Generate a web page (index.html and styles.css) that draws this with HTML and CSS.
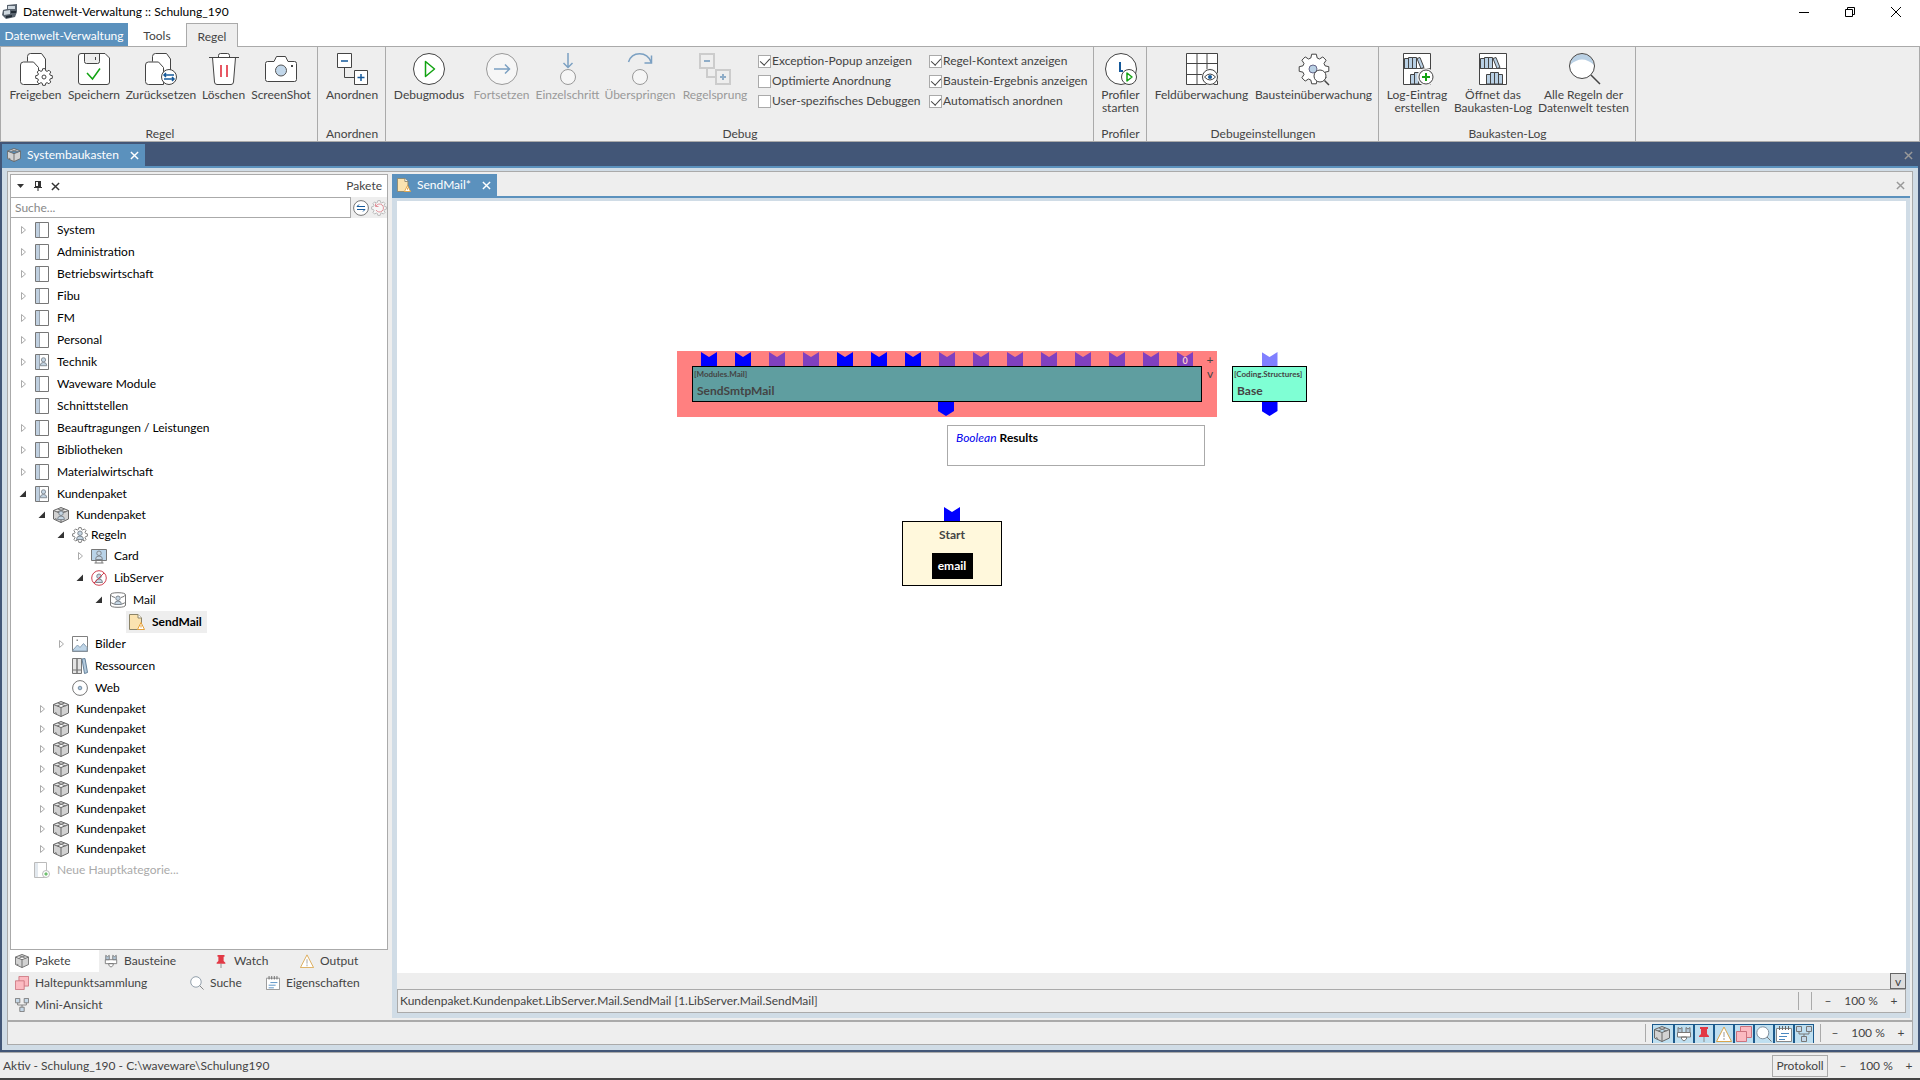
FILE: index.html
```html
<!DOCTYPE html>
<html lang="de">
<head>
<meta charset="utf-8">
<title>Datenwelt-Verwaltung :: Schulung_190</title>
<link rel="stylesheet" href="styles.css">
</head>
<body>
<svg class="defs" aria-hidden="true">
  <symbol id="gear" viewBox="-16 -16 32 32"><path vector-effect="non-scaling-stroke" stroke-linejoin="round" d="M11-3.2L14.8-2.3V2.3L11 3.2 10 5.5 12.1 8.8 8.8 12.1 5.5 10 3.2 11 2.3 14.8H-2.3L-3.2 11-5.5 10-8.8 12.1-12.1 8.8-10 5.5-11 3.2-14.8 2.3V-2.3L-11-3.2-10-5.5-12.1-8.8-8.8-12.1-5.5-10-3.2-11-2.3-14.8H2.3L3.2-11 5.5-10 8.8-12.1 12.1-8.8 10-5.5Z"/></symbol>
  <symbol id="pages" viewBox="0 0 32 32"><path fill="#fff" stroke="#444" d="M7.500 8.500V3.500Q7.500.5 10.500.5H21.500L25.500 6V20M.5 12Q.5 9 3.500 9H13.500L18.500 14.500V31.500H3.500Q.5 31.500.5 28.500Z"/></symbol>
  <symbol id="chip" viewBox="0 0 32 32"><path fill="#fff" stroke="#444" d="M1.500.5H15.500V14.500H1.500ZM18.500 17.500H31.500V31.500H18.500Z"/></symbol>
  <symbol id="person" viewBox="0 0 16 16"><path fill="#c5d6e4" stroke="#808890" d="M4.500 12.500Q4.500 9 8 9T11.500 12.500ZM8 4A2 2 0 1 1 8 8.500 2 2 0 1 1 8 4Z"/></symbol>
  <symbol id="book" viewBox="0 0 16 16"><path fill="#fff" stroke="#777" d="M1.500.5H14.500V15.500H1.500Z"/><path fill="#c0d0e0" d="M2 1H5V15H2Z"/><path stroke="#9aa4ae" d="M5.500 1V15"/></symbol>
  <symbol id="userbook" viewBox="0 0 16 16"><use href="#book"/><use href="#person" x="2" y="0" width="15" height="15"/></symbol>
  <symbol id="box" viewBox="0 0 16 16"><path fill="#d2d2d2" stroke="#666" stroke-linejoin="round" d="M8 .5L15.500 3.500V12L8 15.500.5 12V3.500ZM.5 3.500L8 6.500 15.500 3.500M8 6.500V15.500"/><path stroke="#777" fill="none" d="M4 5L11.500 2M5 2L12.500 5M2 11.500L4 12.500"/></symbol>
  <symbol id="userbox" viewBox="0 0 16 16"><use href="#box"/><use href="#person"/></symbol>
  <symbol id="usergear" viewBox="0 0 16 16"><use href="#gear" width="16" height="16" fill="#fff" stroke="#808080"/><use href="#person" width="16" height="16"/></symbol>
  <symbol id="screen" viewBox="0 0 16 16"><path fill="#b9d3e8" stroke="#777" d="M.5 1.500H15.500V12.500H.5ZM5 12.500V15M11 12.500V15M3.500 15H12.500"/><use href="#person" y="-1" width="16" height="16"/></symbol>
  <symbol id="nouser" viewBox="0 0 16 16"><use href="#person"/><circle cx="8" cy="8" r="7.300" fill="none" stroke="#d04050"/><path stroke="#d04050" d="M13 3L3 13"/></symbol>
  <symbol id="drum" viewBox="0 0 16 16"><path fill="#fff" stroke="#777" d="M.5 3Q.5.7 8 .7T15.500 3V13Q15.500 15.300 8 15.300T.5 13ZM.5 3Q1 4.500 5 5.500M15.500 3Q15 4.500 11 5.500M.5 10Q1 11 4 12M15.500 10Q15 11 12 12"/><use href="#person"/></symbol>
  <symbol id="rule" viewBox="0 0 16 16"><path fill="#fbe3b0" stroke="#8c8468" d="M.5.5H9L12.500 4V15.500H.5Z"/><path fill="#fff" stroke="#8c8468" d="M9 .5V4H12.500"/><path fill="#fff" stroke="#e5a13a" stroke-linejoin="round" d="M12 8.500L15.500 15.500H8.500ZM12 11V13.500"/></symbol>
  <symbol id="image" viewBox="0 0 16 16"><path fill="#fff" stroke="#808080" d="M.5.5H15.500V15.500H.5Z"/><path fill="#c0d6e8" stroke="#8aa0b4" d="M1 14L5.500 9 8 11.500 11.500 7.500 15 11.500V15H1Z"/><path fill="#888" d="M4.500 3.500H6V5H4.500Z"/></symbol>
  <symbol id="folders" viewBox="0 0 16 16"><path fill="#e4e4e4" stroke="#777" d="M.5.5H5V15.500H.5ZM5 .5H9.500V15.500H5ZM1 12H9"/><path fill="#b5cbdd" stroke="#64809a" d="M10 1L13 .5 15.500 14.500 12.500 15.500Z"/></symbol>
  <symbol id="disc" viewBox="0 0 16 16"><circle cx="8" cy="8" r="7.400" fill="#fff" stroke="#777"/><circle cx="8" cy="8" r="1.800" fill="#a8c4de" stroke="#7890a4"/></symbol>
  <symbol id="bricks" viewBox="0 0 16 16"><path fill="#fff" stroke="#777" d="M1.500 6.500H14.500V11H1.500ZM5.500 11H10.500V13L8 15 5.500 13Z"/><path fill="#b4c9da" stroke="#777" d="M2 1.500L4 3 6 1.500V6.500H2ZM10 1.500L12 3 14 1.500V6.500H10Z"/></symbol>
  <symbol id="pin" viewBox="0 0 16 16"><path fill="#e23945" d="M4 1H12V3H11V8L13 10V11H3V10L5 8V3H4Z"/><path stroke="#888" d="M8 11V16"/></symbol>
  <symbol id="warn" viewBox="0 0 16 16"><path fill="#fff" stroke="#d9a54c" stroke-linejoin="round" d="M8 1L15.500 15.500H.5Z"/><path stroke="#999" d="M8 6V11M8 12V14"/></symbol>
  <symbol id="stops" viewBox="0 0 16 16"><path fill="#fbbac1" stroke="#cb737e" d="M4.500.5H15.500V11.500H4.500Z"/><path fill="#fbbac1" stroke="#cb737e" d="M.5 5.500H10.500V15.500H.5Z"/></symbol>
  <symbol id="lens" viewBox="0 0 16 16"><circle cx="6.800" cy="6.800" r="6" fill="#fff" stroke="#8492a0"/><path stroke="#777" d="M11 11L15.500 15.500"/></symbol>
  <symbol id="note" viewBox="0 0 16 16"><path fill="#fff" stroke="#888" d="M.5 2.500H15.500V15.500H.5Z"/><path stroke="#666" d="M3.500 0V4M6.500 0V4M9.500 0V4M12.500 0V4"/><path stroke="#4a88c0" d="M5 7.500H13M3 10.500H11M3 13.500H9"/></symbol>
  <symbol id="net" viewBox="0 0 16 16"><path fill="#c5d8e8" stroke="#777" d="M.5.5H5.500V5.500H.5ZM10.500.5H15.500V5.500H10.500ZM5.500 10.500H10.500V15.500H5.500Z"/><path stroke="#777" d="M3 5.500V8H13V5.500M8 8V10.500"/></symbol>
  <symbol id="newbook" viewBox="0 0 16 16"><path fill="#fff" stroke="#bbb" d="M.5.5H12.500V15.500H.5Z"/><path fill="#e2e8ee" d="M1 1H4V15H1Z"/><circle cx="12" cy="12" r="3.500" fill="#fff" stroke="#bbb"/><path stroke="#6fbf6f" stroke-width="2" d="M10.500 12H13.500M12 10.500V13.500"/></symbol>
  <symbol id="cross" viewBox="0 0 10 10"><path stroke="currentColor" stroke-width="1.600" d="M1 1L9 9M9 1L1 9"/></symbol>
  <symbol id="closed" viewBox="0 0 10 10"><path fill="#fff" stroke="#aaa" d="M2.500 1.500V8.500L6.500 5Z"/></symbol>
  <symbol id="open" viewBox="0 0 10 10"><path fill="#333" d="M7 1.500V8H.5Z"/></symbol>
  <symbol id="shelf" viewBox="0 0 32 32"><path fill="#fff" stroke="#444" d="M2.500.5H29.500V31.500H2.500Z"/><path stroke="#555" d="M3 15.500H29"/><path fill="#b9d0e4" stroke="#444" d="M3.500 5.500H7.500V15.500H3.500ZM7.500 4.500H11.500V15.500H7.500ZM11.500 4.500H15.500V15.500H11.500ZM16 5.500L19 4.500 23 14.500 20 15.500ZM9.500 21.500H13.500V31H9.500ZM13.500 19.500H17.500V31H13.500ZM17.500 19.500H21.500V31H17.500ZM21.500 21.500H25.500V31H21.500Z"/></symbol>
</svg>

<header class="titlebar">
  <svg class="i16" viewBox="0 0 16 16"><path fill="#59636e" d="M5 1L15 0V8L13 13 4 15 0 11 1 6 5 5Z"/><path fill="#cfd8df" d="M6 2H13V5H6ZM2 7L8 6V10L2 11Z"/><path fill="#222c36" d="M9 7H14V9H9ZM4 12L10 11V13L4 14Z"/></svg>
  <h1>Datenwelt-Verwaltung :: Schulung_190</h1>
  <div class="window-buttons">
    <button aria-label="Minimieren"><svg viewBox="0 0 12 12"><path stroke="#000" d="M1 6.500H11"/></svg></button>
    <button aria-label="Wiederherstellen"><svg viewBox="0 0 12 12"><path fill="none" stroke="#000" d="M1.500 3.500H8.500V10.500H1.500ZM3.500 3V1.500H10.500V8.500H9"/></svg></button>
    <button aria-label="Schließen"><svg viewBox="0 0 12 12"><path stroke="#000" d="M1 1L11 11M11 1L1 11"/></svg></button>
  </div>
</header>

<nav class="ribbon-tabs">
  <button class="app-tab">Datenwelt-Verwaltung</button>
  <button class="tab">Tools</button>
  <button class="tab current">Regel</button>
</nav>

<div class="ribbon">
  <section class="group">
    <div class="tools tools-regel">
      <button><svg class="i32" viewBox="0 0 32 32"><use href="#pages" width="32" height="32"/><use href="#gear" x="15" y="15" width="18" height="18" fill="#fff" stroke="#444"/><circle cx="24" cy="24" r="2" fill="#fff" stroke="#444"/></svg><span>Freigeben</span></button>
      <button><svg class="i32" viewBox="0 0 32 32"><path fill="#fff" stroke="#444" d="M3 .5H27L31.500 5V29Q31.500 31.500 29 31.500H3Q.5 31.500.5 29V3Q.5.5 3 .5ZM6.500.5V8.500Q6.500 10.500 8.500 10.500H19.500Q21.500 10.500 21.500 8.500V.5"/><path stroke="#444" d="M17.500 4V7"/><path fill="none" stroke="#12a312" stroke-width="1.500" d="M9 20L14.500 26 22 15.500"/></svg><span>Speichern</span></button>
      <button><svg class="i32" viewBox="0 0 32 32"><use href="#pages" width="32" height="32"/><circle cx="24" cy="24" r="7.500" fill="#fff" stroke="#444"/><path fill="none" stroke="#15599a" stroke-width="1.500" d="M29 22H19M21 20L19 22 21 24M19 26H29M27 24L29 26 27 28"/></svg><span>Zurücksetzen</span></button>
      <button><svg class="i32" viewBox="0 0 32 32"><path fill="#fff" stroke="#444" d="M4.500 4.500H27.500L25.500 29Q25.300 31.500 23 31.500H9Q6.700 31.500 6.500 29ZM1 4.500H31M10.500 4.500V2.500Q10.500.5 12.500.5H19.500Q21.500.5 21.500 2.500V4.500"/><path stroke="#e02030" stroke-width="1.500" d="M13 12V24M19 12V24"/></svg><span>Löschen</span></button>
      <button><svg class="i32" viewBox="0 0 32 32"><path fill="#fff" stroke="#444" d="M2.500 8.500H9L11.500 3.500H20.500L23 8.500H29.500Q31.500 8.500 31.500 10.500V26.500Q31.500 28.500 29.500 28.500H2.500Q.5 28.500.5 26.500V10.500Q.5 8.500 2.500 8.500Z"/><circle cx="16" cy="17.500" r="5.500" fill="#c2d7ea" stroke="#555"/><path fill="#444" d="M26 12H28V14H26Z"/></svg><span>ScreenShot</span></button>
    </div>
    <h2>Regel</h2>
  </section>
  <section class="group">
    <div class="tools tools-anordnen">
      <button><svg class="i32" viewBox="0 0 32 32"><path fill="none" stroke="#444" d="M8.500 15V24.500H18"/><use href="#chip" width="32" height="32"/><path stroke="#15599a" stroke-width="1.500" d="M5 8H12M21.500 24.500H28.500M25 21V28"/></svg><span>Anordnen</span></button>
    </div>
    <h2>Anordnen</h2>
  </section>
  <section class="group">
    <div class="debug-row">
      <div class="tools tools-debug">
        <button><svg class="i32" viewBox="0 0 32 32"><circle cx="16" cy="16" r="15.500" fill="#fff" stroke="#444"/><path fill="none" stroke="#12a312" stroke-width="1.500" stroke-linejoin="round" d="M12.500 8.500V23.500L21.500 16Z"/></svg><span>Debugmodus</span></button>
        <button disabled><svg class="i32" viewBox="0 0 32 32"><circle cx="16" cy="16" r="15.500" fill="#f6f6f6" stroke="#999"/><path fill="none" stroke="#7ba0c2" stroke-width="1.500" d="M8 16H23.500M19 11.500L23.500 16 19 20.500"/></svg><span>Fortsetzen</span></button>
        <button disabled><svg class="i32" viewBox="0 0 32 32"><circle cx="16" cy="24" r="7.500" fill="#f6f6f6" stroke="#999"/><path fill="none" stroke="#7ba0c2" stroke-width="1.500" d="M16 0V14M11.500 10L16 14.500 20.500 10"/></svg><span>Einzelschritt</span></button>
        <button disabled><svg class="i32" viewBox="0 0 32 32"><circle cx="16" cy="24" r="7.500" fill="#f6f6f6" stroke="#999"/><path fill="none" stroke="#7ba0c2" stroke-width="1.500" d="M4.500 9C8 -2 23 -2 27 9M27.500 2.500V10H20.500"/></svg><span>Überspringen</span></button>
        <button disabled><svg class="i32" viewBox="0 0 32 32"><path fill="none" stroke="#ccc" stroke-width="2" d="M8 15V24H17M1 1H15V15H1ZM17 17H31V31H17Z"/><path stroke="#8fadc8" stroke-width="2" d="M5 8H11M21 24H27M24 21V27"/></svg><span>Regelsprung</span></button>
      </div>
      <div class="checks">
        <label><input type="checkbox" checked>Exception-Popup anzeigen</label>
        <label><input type="checkbox" checked>Regel-Kontext anzeigen</label>
        <label><input type="checkbox">Optimierte Anordnung</label>
        <label><input type="checkbox" checked>Baustein-Ergebnis anzeigen</label>
        <label><input type="checkbox">User-spezifisches Debuggen</label>
        <label><input type="checkbox" checked>Automatisch anordnen</label>
      </div>
    </div>
    <h2>Debug</h2>
  </section>
  <section class="group">
    <div class="tools tools-profiler">
      <button><svg class="i32" viewBox="0 0 32 32"><circle cx="16" cy="16" r="15.500" fill="#fff" stroke="#444"/><path fill="none" stroke="#15599a" stroke-width="2" d="M15 9V18H18"/><circle cx="24" cy="24" r="7.500" fill="#fff" stroke="#444"/><path fill="none" stroke="#12a312" stroke-width="1.500" stroke-linejoin="round" d="M22 20V28L27 24Z"/></svg><span>Profiler<br>starten</span></button>
    </div>
    <h2>Profiler</h2>
  </section>
  <section class="group">
    <div class="tools tools-watch">
      <button><svg class="i32" viewBox="0 0 32 32"><path fill="#fff" stroke="#444" d="M.5.5H31.500V31.500H.5ZM11 0V32M21 0V32M0 10.500H32M0 21.500H32"/><circle cx="24" cy="24" r="8.500" fill="#eee"/><circle cx="24" cy="24" r="7.500" fill="#fff" stroke="#444"/><path fill="#fff" stroke="#444" d="M18.500 24Q24 18 29.500 24 24 30 18.500 24Z"/><circle cx="24" cy="24" r="2" fill="#15599a"/></svg><span>Feldüberwachung</span></button>
      <button><svg class="i32" viewBox="0 0 32 32"><use href="#gear" width="32" height="32" fill="#fff" stroke="#444"/><circle cx="15" cy="16" r="4" fill="#b9d0e4" stroke="#668"/><circle cx="22" cy="23" r="6" fill="#fff" stroke="#444"/><path stroke="#444" stroke-width="1.500" d="M26.500 27.500L31 32"/></svg><span>Bausteinüberwachung</span></button>
    </div>
    <h2>Debugeinstellungen</h2>
  </section>
  <section class="group">
    <div class="tools tools-log">
      <button><svg class="i32" viewBox="0 0 32 32"><use href="#shelf" width="32" height="32"/><circle cx="25" cy="24" r="9" fill="#eee"/><circle cx="25" cy="24" r="7" fill="#fff" stroke="#444"/><path stroke="#12a312" stroke-width="2" d="M21 24H29M25 20V28"/></svg><span>Log-Eintrag<br>erstellen</span></button>
      <button><svg class="i32" viewBox="0 0 32 32"><use href="#shelf" width="32" height="32"/></svg><span>Öffnet das<br>Baukasten-Log</span></button>
      <button><svg class="i32" viewBox="0 0 32 32"><circle cx="14" cy="13" r="12.500" fill="#fff"/><path fill="#b9d0e4" d="M2 12Q4 1 14 1T26 12Q14 1 2 12Z"/><circle cx="14" cy="13" r="12.500" fill="none" stroke="#444"/><path stroke="#444" stroke-width="1.500" d="M23 22L32 31"/></svg><span>Alle Regeln der<br>Datenwelt testen</span></button>
    </div>
    <h2>Baukasten-Log</h2>
  </section>
</div>

<main class="workspace">
  <div class="doc-tabs outer-tabs">
    <button class="doc-tab"><svg class="i14" viewBox="0 0 16 16"><use href="#box"/></svg>Systembaukasten<svg class="x"><use href="#cross"/></svg></button>
    <button class="close-all" aria-label="Schließen"><svg class="x"><use href="#cross"/></svg></button>
  </div>
  <div class="frame">
    <div class="board">
      <div class="columns">
        <aside class="side">
          <div class="panel">
            <div class="panel-head">
              <button aria-label="Menü"><svg class="i10" viewBox="0 0 10 10"><path fill="#333" d="M2 3H9L5.500 7Z"/></svg></button>
              <button aria-label="Anheften"><svg class="i10" viewBox="0 0 10 10"><path fill="#333" d="M2 0H8V6H9V7H5.500V10H4.500V7H1V6H2Z"/><path fill="#fff" d="M3 1H5V5H3Z"/></svg></button>
              <button aria-label="Schließen"><svg class="x"><use href="#cross"/></svg></button>
              <h2>Pakete</h2>
            </div>
            <div class="search">
              <input type="text" placeholder="Suche..." aria-label="Suche">
              <button aria-label="Wechseln"><svg class="i16" viewBox="0 0 16 16"><circle cx="8" cy="8" r="7.400" fill="#fff" stroke="#777"/><path fill="none" stroke="#15599a" d="M12 6.500H4M6 4.500L4 6.500M4 9.500H12M10 11.500L12 9.500"/></svg></button>
              <button aria-label="Zurücksetzen"><svg class="i16" viewBox="0 0 16 16"><use href="#gear" width="16" height="16" fill="#f6f6f6" stroke="#bbb"/><path fill="none" stroke="#e2929a" d="M5 10A4 4 0 1 0 5 6M4.500 3.500V6.500H7.500"/></svg></button>
            </div>
            <ul class="tree">
              <li><svg class="arrow"><use href="#closed"/></svg><svg class="i16"><use href="#book"/></svg><span>System</span></li>
              <li><svg class="arrow"><use href="#closed"/></svg><svg class="i16"><use href="#book"/></svg><span>Administration</span></li>
              <li><svg class="arrow"><use href="#closed"/></svg><svg class="i16"><use href="#book"/></svg><span>Betriebswirtschaft</span></li>
              <li><svg class="arrow"><use href="#closed"/></svg><svg class="i16"><use href="#book"/></svg><span>Fibu</span></li>
              <li><svg class="arrow"><use href="#closed"/></svg><svg class="i16"><use href="#book"/></svg><span>FM</span></li>
              <li><svg class="arrow"><use href="#closed"/></svg><svg class="i16"><use href="#book"/></svg><span>Personal</span></li>
              <li><svg class="arrow"><use href="#closed"/></svg><svg class="i16"><use href="#userbook"/></svg><span>Technik</span></li>
              <li><svg class="arrow"><use href="#closed"/></svg><svg class="i16"><use href="#book"/></svg><span>Waveware Module</span></li>
              <li><svg class="arrow"></svg><svg class="i16"><use href="#book"/></svg><span>Schnittstellen</span></li>
              <li><svg class="arrow"><use href="#closed"/></svg><svg class="i16"><use href="#book"/></svg><span>Beauftragungen / Leistungen</span></li>
              <li><svg class="arrow"><use href="#closed"/></svg><svg class="i16"><use href="#book"/></svg><span>Bibliotheken</span></li>
              <li><svg class="arrow"><use href="#closed"/></svg><svg class="i16"><use href="#book"/></svg><span>Materialwirtschaft</span></li>
              <li><svg class="arrow"><use href="#open"/></svg><svg class="i16"><use href="#userbook"/></svg><span>Kundenpaket</span></li>
              <li class="l1 tight"><svg class="arrow"><use href="#open"/></svg><svg class="i16"><use href="#userbox"/></svg><span>Kundenpaket</span></li>
              <li class="l2 tight near"><svg class="arrow"><use href="#open"/></svg><svg class="i16"><use href="#usergear"/></svg><span>Regeln</span></li>
              <li class="l3"><svg class="arrow"><use href="#closed"/></svg><svg class="i16"><use href="#screen"/></svg><span>Card</span></li>
              <li class="l3"><svg class="arrow"><use href="#open"/></svg><svg class="i16"><use href="#nouser"/></svg><span>LibServer</span></li>
              <li class="l4"><svg class="arrow"><use href="#open"/></svg><svg class="i16"><use href="#drum"/></svg><span>Mail</span></li>
              <li class="l5"><svg class="arrow"></svg><div class="selected"><svg class="i16"><use href="#rule"/></svg><span>SendMail</span></div></li>
              <li class="l2"><svg class="arrow"><use href="#closed"/></svg><svg class="i16"><use href="#image"/></svg><span>Bilder</span></li>
              <li class="l2"><svg class="arrow"></svg><svg class="i16"><use href="#folders"/></svg><span>Ressourcen</span></li>
              <li class="l2"><svg class="arrow"></svg><svg class="i16"><use href="#disc"/></svg><span>Web</span></li>
              <li class="l1 tight"><svg class="arrow"><use href="#closed"/></svg><svg class="i16"><use href="#box"/></svg><span>Kundenpaket</span></li>
              <li class="l1 tight"><svg class="arrow"><use href="#closed"/></svg><svg class="i16"><use href="#box"/></svg><span>Kundenpaket</span></li>
              <li class="l1 tight"><svg class="arrow"><use href="#closed"/></svg><svg class="i16"><use href="#box"/></svg><span>Kundenpaket</span></li>
              <li class="l1 tight"><svg class="arrow"><use href="#closed"/></svg><svg class="i16"><use href="#box"/></svg><span>Kundenpaket</span></li>
              <li class="l1 tight"><svg class="arrow"><use href="#closed"/></svg><svg class="i16"><use href="#box"/></svg><span>Kundenpaket</span></li>
              <li class="l1 tight"><svg class="arrow"><use href="#closed"/></svg><svg class="i16"><use href="#box"/></svg><span>Kundenpaket</span></li>
              <li class="l1 tight"><svg class="arrow"><use href="#closed"/></svg><svg class="i16"><use href="#box"/></svg><span>Kundenpaket</span></li>
              <li class="l1 tight"><svg class="arrow"><use href="#closed"/></svg><svg class="i16"><use href="#box"/></svg><span>Kundenpaket</span></li>
              <li class="new"><svg class="arrow"></svg><svg class="i16"><use href="#newbook"/></svg><span>Neue Hauptkategorie...</span></li>
            </ul>
          </div>
          <nav class="side-tabs">
            <div class="tab-row row-a">
              <button class="active"><svg class="i14"><use href="#box"/></svg>Pakete</button>
              <button><svg class="i14"><use href="#bricks"/></svg>Bausteine</button>
              <button><svg class="i14"><use href="#pin"/></svg>Watch</button>
              <button><svg class="i14"><use href="#warn"/></svg>Output</button>
            </div>
            <div class="tab-row row-b">
              <button><svg class="i14"><use href="#stops"/></svg>Haltepunktsammlung</button>
              <button><svg class="i14"><use href="#lens"/></svg>Suche</button>
              <button><svg class="i14"><use href="#note"/></svg>Eigenschaften</button>
            </div>
            <div class="tab-row">
              <button><svg class="i14"><use href="#net"/></svg>Mini-Ansicht</button>
            </div>
          </nav>
        </aside>

        <section class="editor">
          <div class="doc-tabs inner-tabs">
            <button class="doc-tab"><svg class="i14"><use href="#rule"/></svg>SendMail*<svg class="x"><use href="#cross"/></svg></button>
            <button class="close-all" aria-label="Schließen"><svg class="x"><use href="#cross"/></svg></button>
          </div>
          <div class="sheet">
            <div class="canvas">
              <div class="node smtp">
                <div class="ports">
                  <i class="port in"></i><i class="port in"></i><i class="port in optional"></i><i class="port in optional"></i><i class="port in"></i><i class="port in"></i><i class="port in"></i><i class="port in optional"></i><i class="port in optional"></i><i class="port in optional"></i><i class="port in optional"></i><i class="port in optional"></i><i class="port in optional"></i><i class="port in optional"></i><b class="port in optional">0</b>
                </div>
                <div class="block">
                  <small>[Modules.Mail]</small>
                  <strong>SendSmtpMail</strong>
                </div>
                <i class="port out"></i>
                <div class="handles"><span>+</span><span>v</span></div>
              </div>
              <div class="node base">
                <i class="port in optional"></i>
                <div class="block">
                  <small>[Coding.Structures]</small>
                  <strong>Base</strong>
                </div>
                <i class="port out"></i>
              </div>
              <div class="node results"><em>Boolean</em> <b>Results</b></div>
              <div class="node start">
                <i class="port in"></i>
                <div class="block">
                  <strong>Start</strong>
                  <span class="value">email</span>
                </div>
              </div>
            </div>
            <div class="scroll-strip"><button>v</button></div>
            <div class="path-bar">
              <span class="path">Kundenpaket.Kundenpaket.LibServer.Mail.SendMail [1.LibServer.Mail.SendMail]</span>
              <i class="sep"></i><i class="sep"></i>
              <div class="zoom"><button>–</button><span>100 %</span><button>+</button></div>
            </div>
          </div>
        </section>
      </div>
      <div class="board-bar">
        <i class="sep"></i>
        <div class="dock">
          <button aria-label="Pakete"><svg class="i16"><use href="#box"/></svg></button>
          <button aria-label="Bausteine"><svg class="i16"><use href="#bricks"/></svg></button>
          <button aria-label="Watch"><svg class="i16"><use href="#pin"/></svg></button>
          <button aria-label="Output"><svg class="i16"><use href="#warn"/></svg></button>
          <button aria-label="Haltepunktsammlung"><svg class="i16"><use href="#stops"/></svg></button>
          <button aria-label="Suche"><svg class="i16"><use href="#lens"/></svg></button>
          <button aria-label="Eigenschaften"><svg class="i16"><use href="#note"/></svg></button>
          <button aria-label="Mini-Ansicht"><svg class="i16"><use href="#net"/></svg></button>
        </div>
        <i class="sep"></i>
        <div class="zoom"><button>–</button><span>100 %</span><button>+</button></div>
      </div>
    </div>
  </div>
</main>

<footer class="status">
  <span class="path">Aktiv - Schulung_190 - C:\waveware\Schulung190</span>
  <button class="log">Protokoll</button>
  <div class="zoom"><button>–</button><span>100 %</span><button>+</button></div>
</footer>
</body>
</html>
```
FILE: styles.css
```css
* { box-sizing: border-box; }

body {
  margin: 0;
  min-height: 100vh;
  display: flex;
  flex-direction: column;
  background: #fff;
  color: #444;
  font: 12px/16px Lato, "Open Sans", sans-serif;
}

button {
  margin: 0;
  padding: 0;
  border: 0;
  background: none;
  color: inherit;
  font: inherit;
  white-space: nowrap;
}

h1, h2 { margin: 0; font-size: 12px; font-weight: 400; }
svg { display: block; flex: none; fill: none; }
.defs { position: absolute; width: 0; height: 0; }
.i10 { width: 10px; height: 10px; }
.i14 { width: 14px; height: 14px; }
.i16 { width: 16px; height: 16px; }
.i32 { width: 32px; height: 32px; overflow: visible; }
.x { width: 9px; height: 9px; }
.sep { width: 1px; height: 18px; background: #aaa; }

/* title bar */
.titlebar { display: flex; align-items: center; height: 23px; padding-left: 2px; gap: 5px; color: #000; }
.window-buttons { display: flex; margin-left: auto; padding-right: 1px; }
.window-buttons button { width: 46px; display: flex; justify-content: center; }
.window-buttons svg { width: 12px; height: 12px; }

/* ribbon */
.ribbon-tabs { display: flex; height: 24px; margin-bottom: -1px; position: relative; }
.ribbon-tabs button { padding-top: 2px; }
.app-tab { width: 128px; height: 23px; background: #5b91bd; color: #fff; }
.tab { width: 58px; }
.tab.current { width: 52px; border: 1px solid #aaa; border-bottom: 0; background: #eee; }
.ribbon { display: flex; min-height: 96px; padding-left: 1px; border: 1px solid #aaa; background: #eee; }
.group { display: flex; flex-direction: column; padding: 6px 3px 0 4px; border-right: 1px solid #aaa; }
.group h2 { margin-top: auto; line-height: 15px; text-align: center; }
.tools { display: grid; justify-content: center; }
.tools button { display: flex; flex-direction: column; align-items: center; gap: 3px; line-height: 13px; }
.tools button:disabled { color: #999; }
.tools-regel { grid-template-columns: 59px 58px 76px 49px 66px; }
.tools-anordnen { grid-template-columns: 60px; }
.tools-debug { grid-template-columns: 78px 67px 65px 80px 70px; }
.tools-profiler { grid-template-columns: 45px; }
.tools-watch { grid-template-columns: 101px 123px; }
.tools-log { grid-template-columns: 68px 84px 97px; }
.debug-row { display: flex; gap: 8px; }
.checks { display: grid; grid-template-columns: 171px 161px; align-content: start; row-gap: 4px; }
.checks label { display: flex; align-items: center; gap: 1px; white-space: nowrap; }
.checks input {
  appearance: none;
  display: grid;
  place-items: center;
  flex: none;
  width: 13px;
  height: 13px;
  margin: 0;
  border: 1px solid #aaa;
  background: #fff;
}
.checks input:checked::after {
  content: "";
  width: 5px;
  height: 8px;
  margin-bottom: 2px;
  border: solid #444;
  border-width: 0 1px 1px 0;
  transform: rotate(42deg);
}

/* document tabs */
.doc-tabs { display: flex; align-items: stretch; justify-content: space-between; border-bottom: 2px solid #5b91bd; }
.doc-tab { display: flex; align-items: center; padding: 0 6px 0 5px; background: #5b91bd; color: #fff; }
.doc-tab .i14 { margin-right: 6px; }
.doc-tab .x { margin-left: auto; }
.close-all { padding-right: 5px; color: #999; }
.outer-tabs { height: 26px; padding-top: 2px; }
.outer-tabs .doc-tab { width: 143px; }
.inner-tabs { height: 24px; }
.inner-tabs .doc-tab { width: 105px; }

/* workspace */
.workspace { flex: 1; display: flex; flex-direction: column; padding: 0 2px 2px; background: #425677; }
.frame { flex: 1; display: flex; padding: 3px 5px 5px; background: #d0dce6; }
.board { flex: 1; min-width: 0; display: flex; flex-direction: column; border: 1px solid #aaa; background: #eee; }
.columns { flex: 1; display: flex; gap: 4px; padding: 2px; }
.board-bar { display: flex; align-items: center; height: 24px; border-top: 2px solid #aaa; justify-content: flex-end; gap: 6px; padding-right: 3px; }

/* package panel */
.side { width: 378px; display: flex; flex-direction: column; }
.panel { flex: 1; display: flex; flex-direction: column; border: 1px solid #aaa; background: #fff; }
.panel-head { display: flex; align-items: center; height: 22px; padding: 0 5px 0 4px; gap: 8px; }
.panel-head h2 { margin-left: auto; }
.panel-head button { color: #333; }
.search { display: flex; align-items: center; height: 21px; gap: 2px; background: #eee; }
.search input {
  flex: 1;
  min-width: 0;
  align-self: stretch;
  padding: 0 4px;
  border: 1px solid #aaa;
  border-left: 0;
  background: #fff;
  font: inherit;
  color: #444;
}
.search input::placeholder { color: #888; }
.tree { list-style: none; margin: 0; padding: 1px 0 0; color: #000; }
.tree li { display: flex; align-items: center; height: 22px; padding-left: 8px; white-space: nowrap; }
.tree li > .i16 { margin: 0 7px 0 5px; }
.arrow { width: 10px; height: 10px; }
.tree .tight { height: 20px; }
.tree .l1 { padding-left: 27px; }
.tree .l2 { padding-left: 46px; }
.tree .l3 { padding-left: 65px; }
.tree .l4 { padding-left: 84px; }
.tree .l5 { padding-left: 103px; }
.tree .near > .i16 { margin-right: 3px; }
.tree .new { color: #aaa; }
.selected { display: flex; align-items: center; gap: 7px; height: 22px; margin-left: 2px; padding: 0 5px 0 3px; background: #eee; font-weight: 700; }
.side-tabs { display: flex; flex-direction: column; padding-bottom: 2px; }
.tab-row { display: grid; }
.row-a { grid-template-columns: 89fr 110fr 86fr 93fr; }
.row-b { grid-template-columns: 175fr 76fr 127fr; }
.tab-row button { display: flex; align-items: center; height: 22px; gap: 6px; padding-left: 5px; }
.tab-row .active { background: #fff; }

/* editor */
.editor { flex: 1; min-width: 0; display: flex; flex-direction: column; }
.sheet { flex: 1; display: flex; flex-direction: column; padding: 3px 4px 5px 5px; background: #d0dce6; }
.canvas { flex: 1; position: relative; overflow: hidden; background: #fff; }
.scroll-strip { display: flex; justify-content: flex-end; background: #eee; }
.scroll-strip button { width: 16px; height: 16px; border: 1px solid #666; background: #ddd; }
.path-bar { display: flex; align-items: center; height: 24px; gap: 12px; padding: 0 3px 0 2px; border: 1px solid #aaa; background: #eee; }
.path { margin-right: auto; }

.zoom { display: flex; align-items: center; }
.zoom button { width: 16px; }
.zoom span { width: 50px; text-align: center; }
.path-bar .zoom { margin-left: -4px; }

.dock { display: flex; height: 19px; border: solid #1c5a8c; border-width: 1px 1px 0; }
.dock button { width: 20px; padding: 1px 1px 0; background: #bfdff0; overflow: hidden; }
.dock button + button { border-left: 2px solid #1c5a8c; }

/* rule graph */
.node { position: absolute; }
.block { display: flex; flex-direction: column; height: 36px; border: 1px solid #000; }
.block small { padding-left: 1px; font-size: 8px; font-weight: 700; line-height: 14px; white-space: nowrap; }
.block strong { padding-left: 4px; line-height: 20px; }
.port { display: block; width: 16px; height: 14px; background: #00f; }
.port.in { clip-path: polygon(0 0, 50% 36%, 100% 0, 100% 100%, 0 100%); }
.port.out { clip-path: polygon(0 0, 100% 0, 100% 64%, 50% 100%, 0 64%); margin: 0 auto; }
.smtp { left: 280px; top: 150px; width: 540px; height: 66px; padding: 1px 15px; background: #ff8080; }
.smtp .ports { display: flex; gap: 18px; padding-left: 9px; }
.smtp .optional { background: #8040bf; color: #fcc; font-size: 9px; line-height: 18px; text-align: center; }
.smtp .block { background: #5f9ea0; }
.smtp .out { margin-left: 246px; }
.handles { position: absolute; right: 0; top: 2px; width: 14px; display: flex; flex-direction: column; align-items: center; line-height: 14px; }
.base { left: 835px; top: 151px; width: 75px; }
.base .in { margin: 0 auto; background: #8080ff; }
.base .block { background: #7fffd4; }
.results { left: 550px; top: 224px; width: 258px; height: 41px; padding: 4px 8px; border: 1px solid #aaa; background: #fff; color: #000; }
.results em { color: #00e; }
.start { left: 505px; top: 306px; width: 100px; }
.start .port { margin: 0 auto; }
.start .block { height: 65px; align-items: center; gap: 8px; padding-top: 3px; background: #fff8dc; }
.start strong { padding: 0; }
.value { width: 41px; background: #000; color: #fff; font-weight: 700; line-height: 26px; text-align: center; }

/* status bar */
.status { display: flex; align-items: center; height: 28px; padding: 0 3px; border-top: 1px solid #aaa; border-bottom: 2px solid #444; background: #eee; }
.log { width: 56px; height: 22px; margin-right: 7px; border: 1px solid #aaa; }
```
